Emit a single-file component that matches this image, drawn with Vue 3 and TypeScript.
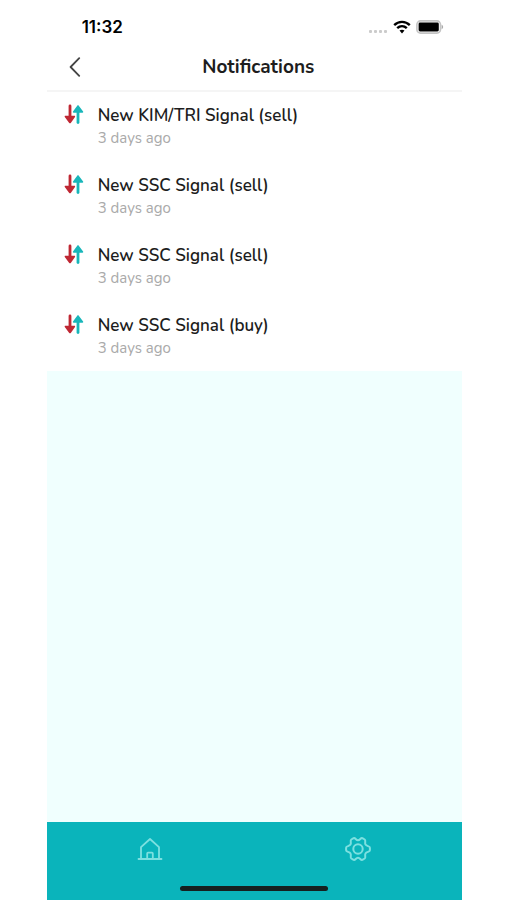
<script setup lang="ts">
interface Notification {
  id: number
  title: string
  time: string
}

const notifications: Notification[] = [
  { id: 1, title: 'New KIM/TRI Signal (sell)', time: '3 days ago' },
  { id: 2, title: 'New SSC Signal (sell)', time: '3 days ago' },
  { id: 3, title: 'New SSC Signal (sell)', time: '3 days ago' },
  { id: 4, title: 'New SSC Signal (buy)', time: '3 days ago' },
]
</script>

<template>
  <div class="screen">
    <div class="status">
      <span class="clock">11:32</span>
      <div class="indicators">
        <svg width="20" height="18" viewBox="0 0 20 18" aria-hidden="true">
          <g fill="#cbcbcb">
            <rect x="1" y="12" width="3" height="3" rx="1" />
            <rect x="6" y="12" width="3" height="3" rx="1" />
            <rect x="11" y="12" width="3" height="3" rx="1" />
            <rect x="16" y="12" width="3" height="3" rx="1" />
          </g>
        </svg>
        <svg width="18" height="14" viewBox="0 0 18 14" aria-hidden="true">
          <g fill="none" stroke="#000" stroke-width="2.4">
            <path d="M1.2 5.1C5.6.8 12.4.8 16.8 5.1" />
            <path d="M4.2 8.2c2.8-2.6 6.8-2.6 9.6 0" />
          </g>
          <path d="M6.5 10.6c1.5-1.3 3.5-1.3 5 0L9 13.4z" />
        </svg>
        <svg width="28" height="14" viewBox="0 0 28 14" aria-hidden="true">
          <rect x=".9" y=".9" width="23.6" height="12.2" rx="3.6" fill="#fff" stroke="#c4c4c4" stroke-width="1.6" />
          <rect x="2.6" y="2.5" width="20.2" height="9" rx="1.4" />
          <path d="M25.6 4.8c2 .7 2 3.7 0 4.4z" fill="#aaa" />
        </svg>
      </div>
    </div>

    <header class="header">
      <button class="back" type="button" aria-label="Back">
        <svg width="12" height="20" viewBox="0 0 12 20" aria-hidden="true">
          <path d="M10.2 1.2 1.6 10l8.6 8.8" fill="none" stroke="#444" stroke-width="1.8" stroke-linecap="round" stroke-linejoin="round" />
        </svg>
      </button>
      <h1 class="heading">Notifications</h1>
    </header>

    <main class="content">
      <ul class="list">
        <li v-for="item in notifications" :key="item.id" class="item">
          <svg class="arrows" width="20" height="20" viewBox="0 0 20 20" aria-hidden="true">
            <path d="M6 2v11" stroke="#bf2733" stroke-width="2.8" stroke-linecap="round" />
            <path d="M1.4 11.8h9c.7 0 1 .7.6 1.2l-4.200 5.900c-.4.500-1.200.500-1.600 0L.8 13c-.4-.5-.1-1.200.6-1.200z" fill="#bf2733" />
            <path d="M14 18.600V7" stroke="#18b6ba" stroke-width="2.800" stroke-linecap="round" />
            <path d="M9.600 8.800h8.900c.7 0 1-.7.6-1.200l-4.300-5.900c-.4-.5-1.200-.5-1.600 0L9 7.600c-.4.5-.1 1.200.6 1.200z" fill="#18b6ba" />
          </svg>
          <div class="texts">
            <span class="title">{{ item.title }}</span>
            <span class="time">{{ item.time }}</span>
          </div>
        </li>
      </ul>
    </main>

    <nav class="tabs">
      <div class="links">
        <a class="tab" href="#home" aria-label="Home">
          <svg width="26" height="26" viewBox="0 0 26 26" aria-hidden="true">
            <g fill="none" stroke="#7de0e0" stroke-width="1.8" stroke-linecap="round" stroke-linejoin="round">
              <path d="M1.5 23h23M4 23V11.2L13 3l9 8.2V23" />
              <path d="M10.2 23v-5.6c0-.5.3-.8.8-.8h4c.5 0 .8.3.8.8V23" />
            </g>
          </svg>
        </a>
        <a class="tab" href="#settings" aria-label="Settings">
          <svg width="26" height="26" viewBox="0 0 26 26" aria-hidden="true">
            <g fill="none" stroke="#7de0e0" stroke-width="2" stroke-linejoin="round">
              <path d="M8.6 2.2C10.5 1.5 10.7 4.3 13 4.3s2.5-2.8 4.4-2.1l2.3 1.3c1.5 1.1-.3 3.2.8 5.1s4.400 1.200 4.400 3.100v2.600c0 1.900-3.300 1.200-4.400 3.100s.7 4-.8 5.100l-2.300 1.300c-1.900.7-2.100-2.100-4.400-2.100s-2.500 2.800-4.400 2.100l-2.300-1.300c-1.500-1.100.3-3.200-.8-5.100s-4.400-1.200-4.400-3.100v-2.600c0-1.900 3.300-1.200 4.400-3.100s-.7-4 .8-5.100z" />
              <circle cx="13" cy="13" r="4.7" />
            </g>
          </svg>
        </a>
      </div>
      <div class="indicator"></div>
    </nav>
  </div>
</template>

<style>
body {
  margin: 0;
  background: #fff;
}
</style>

<style scoped>
.screen {
  box-sizing: border-box;
  min-height: 100vh;
  margin: 0 8.9% 0 9.2%;
  display: flex;
  flex-direction: column;
  background: #fff;
  color: #1d1d1d;
  font-family: Nunito, "Noto Sans", sans-serif;
}

.status {
  height: 44px;
  padding: 10px 18px 0 35px;
  box-sizing: border-box;
  display: flex;
  align-items: center;
  justify-content: space-between;
}

.clock {
  font: 600 17px/20px Inter, sans-serif;
  color: #000;
}

.indicators {
  display: flex;
  align-items: center;
  gap: 5px;
}

.header {
  height: 46px;
  padding: 0 22px;
  display: grid;
  grid-template-columns: 32px 1fr 24px;
  align-items: center;
  border-bottom: 2px solid #f5f5f5;
}

.back {
  height: 32px;
  padding: 0;
  border: 0;
  background: none;
  display: flex;
  align-items: center;
  cursor: pointer;
}

.heading {
  margin: 0;
  text-align: center;
  font-size: 19px;
  line-height: 24px;
  font-weight: 700;
}

.content {
  flex: 1;
  background: #f0fffe;
}

.list {
  margin: 0;
  padding: 0;
  list-style: none;
  display: grid;
  gap: 1px;
  background: #fff;
}

.item {
  height: 69px;
  padding: 12px 17px 0;
  box-sizing: border-box;
  display: flex;
  gap: 14px;
}

.arrows {
  flex: none;
}

.texts {
  display: flex;
  flex-direction: column;
}

.title {
  font-size: 17px;
  line-height: 24px;
  font-weight: 600;
}

.time {
  font-size: 15px;
  line-height: 20px;
  color: #aaa;
}

.tabs {
  height: 78px;
  padding: 14px 0 9px;
  box-sizing: border-box;
  display: flex;
  flex-direction: column;
  align-items: center;
  justify-content: space-between;
  background: #0ab4bb;
}

.links {
  width: 100%;
  display: flex;
}

.tab {
  flex: 1;
  display: flex;
  justify-content: center;
}

.indicator {
  width: 148px;
  height: 5px;
  border-radius: 3px;
  background: #15201f;
}
</style>
